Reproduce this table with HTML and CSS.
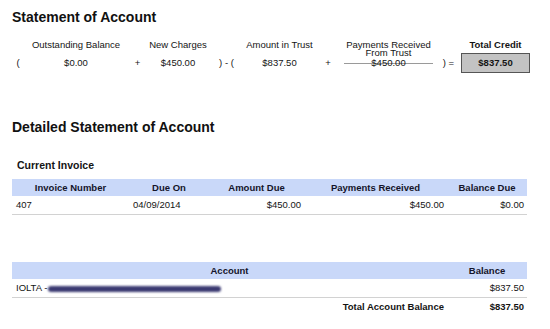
FILE: index.html
```html
<!DOCTYPE html>
<html>
<head>
<meta charset="utf-8">
<link rel="stylesheet" href="styles.css">
</head>
<body>
<div class="page">
  <h1 class="title">Statement of Account</h1>

  <div class="summary">
    <div class="lbl"></div>
    <div class="lbl">Outstanding Balance</div>
    <div class="lbl"></div>
    <div class="lbl">New Charges</div>
    <div class="lbl"></div>
    <div class="lbl">Amount in Trust</div>
    <div class="lbl"></div>
    <div class="lbl two">Payments Received<br>From Trust</div>
    <div class="lbl"></div>
    <div class="lbl bold">Total Credit</div>

    <div class="val">(</div>
    <div class="val">$0.00</div>
    <div class="val">+</div>
    <div class="val">$450.00</div>
    <div class="val">) - (</div>
    <div class="val">$837.50</div>
    <div class="val">+</div>
    <div class="val frac">$450.00</div>
    <div class="val">) =</div>
    <div class="val total">$837.50</div>
  </div>

  <h1 class="title detailed">Detailed Statement of Account</h1>
  <h2 class="subtitle">Current Invoice</h2>

  <div class="table invoice">
    <div class="th">Invoice Number</div>
    <div class="th">Due On</div>
    <div class="th">Amount Due</div>
    <div class="th">Payments Received</div>
    <div class="th">Balance Due</div>
    <div class="td">407</div>
    <div class="td">04/09/2014</div>
    <div class="td num">$450.00</div>
    <div class="td num">$450.00</div>
    <div class="td num">$0.00</div>
  </div>

  <div class="table account">
    <div class="th">Account</div>
    <div class="th">Balance</div>
    <div class="td">IOLTA -<span class="redact"></span></div>
    <div class="td num">$837.50</div>
    <div class="tt num">Total Account Balance</div>
    <div class="tt num">$837.50</div>
  </div>
</div>
</body>
</html>
```

FILE: styles.css
```css
html, body {
  margin: 0;
  padding: 0;
  background: #ffffff;
}

body {
  font-family: "Liberation Sans", Arial, Helvetica, sans-serif;
  color: #141414;
  font-size: 9.5px;
}

.page {
  padding: 9px 0 0 12px;
}

.title {
  margin: 0;
  font-size: 14px;
  line-height: 16px;
  font-weight: bold;
  color: #111;
}

.summary {
  margin-top: 13px;
  display: grid;
  grid-template-columns: 12px 104px 19px 62px 35px 71px 26px 95px 25px 69px;
  grid-template-rows: 15px 20px;
}

.lbl {
  text-align: center;
  line-height: 14px;
  white-space: nowrap;
}

.lbl.two {
  line-height: 8px;
  padding-top: 2.5px;
}

.bold {
  font-weight: bold;
}

.val {
  text-align: center;
  line-height: 20px;
  white-space: nowrap;
}

.frac {
  margin: 0 3px;
  background: linear-gradient(#9a9a9a, #9a9a9a) no-repeat center / 100% 1px;
}

.total {
  background: #c3c3c3;
  border: 1.5px solid #555;
  line-height: 17px;
  font-weight: bold;
}

.detailed {
  margin-top: 46px;
}

.subtitle {
  margin: 24px 0 0 5px;
  font-size: 10.5px;
  line-height: 12px;
  font-weight: bold;
}

.table {
  display: grid;
  width: 515px;
}

.invoice {
  margin-top: 8px;
  grid-template-columns: 117px 80px 95px 143px 80px;
}

.account {
  margin-top: 47px;
  grid-template-columns: 435px 80px;
}

.th {
  background: #c9d8f9;
  font-weight: bold;
  text-align: center;
  line-height: 17px;
  height: 17px;
  white-space: nowrap;
  color: #14142a;
}

.td {
  line-height: 18px;
  height: 18px;
  padding: 0 4px;
  border-bottom: 1px solid #d2d2d2;
  white-space: nowrap;
}

.tt {
  line-height: 18px;
  height: 18px;
  padding: 0 4px;
  font-weight: bold;
  white-space: nowrap;
}

.num {
  text-align: right;
  padding-right: 3px;
}

.redact {
  display: inline-block;
  width: 173px;
  height: 6px;
  margin-left: 1px;
  vertical-align: -1px;
  background: #3b3a72;
  border-radius: 3px;
  filter: blur(1px);
}
```
